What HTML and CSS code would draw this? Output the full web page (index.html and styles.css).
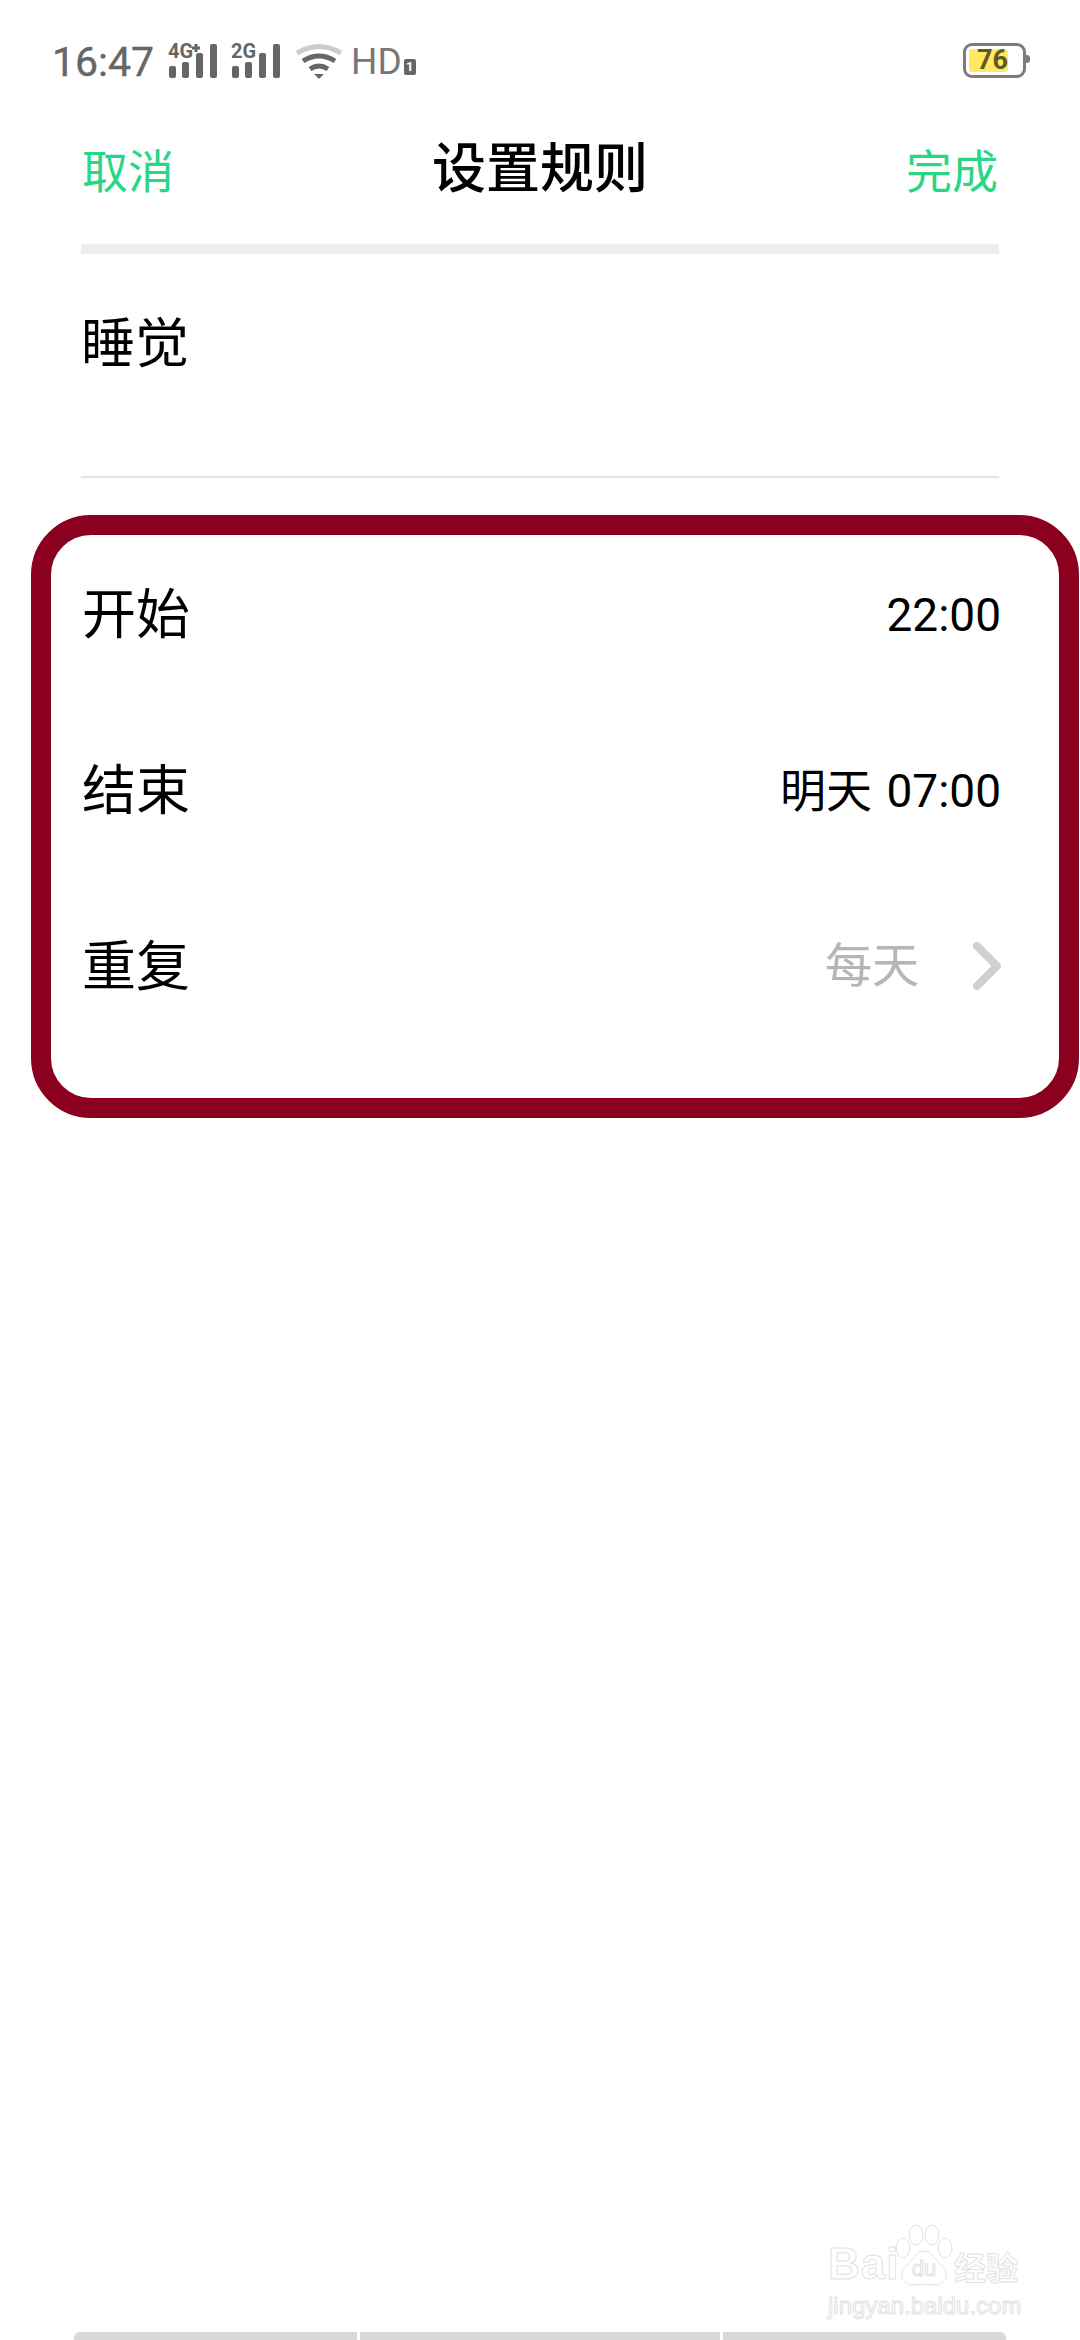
FILE: index.html
```html
<html>
  <head>
    <title>设置规则</title>
    <meta charset="UTF-8" />
    <link rel="stylesheet" href="styles.css">
  </head>
  <body>
    <div class="page">
      <div class="status">
        <span class="time">16:47</span>
        <svg class="sig sig-4g" viewBox="0 -8 50 42" width="50" height="42">
          <text x="0" y="14" class="sig-text">4G</text>
          <path d="M24 4h8M28 0v8" class="sig-plus" />
          <rect x="1" y="22" width="7" height="12" rx="2" />
          <rect x="14" y="18" width="7" height="16" rx="2" />
          <rect x="28" y="9" width="7" height="25" rx="2" />
          <rect x="42" y="0" width="7" height="34" rx="2" />
        </svg>
        <svg class="sig sig-2g" viewBox="0 -8 50 42" width="50" height="42">
          <text x="0" y="14" class="sig-text">2G</text>
          <rect x="1" y="22" width="7" height="12" rx="2" />
          <rect x="14" y="18" width="7" height="16" rx="2" />
          <rect x="28" y="9" width="7" height="25" rx="2" />
          <rect x="42" y="0" width="7" height="34" rx="2" />
        </svg>
        <svg class="wifi" viewBox="0 0 48 36" width="48" height="36">
          <path d="M2 10Q24 -3 46 10" class="arc-light" />
          <path d="M8 18Q24 8 40 18" class="arc-dark" />
          <path d="M15 26Q24 20 33 26" class="arc-dark" />
          <path d="M19 31L29 31L24 36Z" fill="#666" />
        </svg>
        <span class="hd">HD</span>
        <span class="sim">1</span>
        <span class="battery">
          <span class="battery-fill">76</span>
        </span>
      </div>

      <div class="nav">
        <span class="nav-btn">取消</span>
        <span class="nav-title">设置规则</span>
        <span class="nav-btn">完成</span>
      </div>
      <div class="rule"></div>

      <div class="name">睡觉</div>

      <div class="frame">
        <div class="row">
          <span>开始</span>
          <span class="value">22:00</span>
        </div>
        <div class="row">
          <span>结束</span>
          <span class="value">明天 07:00</span>
        </div>
        <div class="row">
          <span>重复</span>
          <span class="value value-muted">每天
            <svg class="chevron" viewBox="0 0 28 48" width="28" height="48">
              <path d="M4 4L24 24L4 44" />
            </svg>
          </span>
        </div>
      </div>

      <div class="homebar">
        <div class="homebar-seg"></div>
        <div class="homebar-seg homebar-mid"></div>
        <div class="homebar-seg"></div>
      </div>

      <!-- watermark sits over the blank page -->
      <div class="mark">
        <div class="mark-top">
          <span class="mark-bai">Bai</span>
          <svg class="paw" viewBox="0 0 60 64" width="60" height="64">
            <ellipse cx="9" cy="24" rx="7" ry="10" />
            <ellipse cx="22" cy="11" rx="7" ry="10" />
            <ellipse cx="38" cy="11" rx="7" ry="10" />
            <ellipse cx="51" cy="24" rx="7" ry="10" />
            <path d="M30 27C21 27 20 36 12 42C3 50 9 62 20 61C26 60 34 60 40 61C51 62 57 50 48 42C40 36 39 27 30 27Z" />
            <text x="30" y="52" class="paw-du">du</text>
          </svg>
          <span class="mark-cn">经验</span>
        </div>
        <div class="mark-url">jingyan.baidu.com</div>
      </div>
    </div>
  </body>
</html>
```

FILE: styles.css
```css
body {
  margin: 0;
  background-color: #fff;
  font-family: "Noto Sans CJK SC", sans-serif;
  color: #000;
}

.page {
  position: relative;
  display: flex;
  flex-direction: column;
  width: 1080px;
  height: 2340px;
  overflow: hidden;
}

.status {
  display: flex;
  align-items: flex-start;
  height: 100px;
  padding: 43px 54px 0 52px;
  box-sizing: border-box;
  color: #666;
  font-family: Roboto, sans-serif;
}

.time {
  width: 116px;
  font-size: 41px;
  line-height: 38px;
  -webkit-text-stroke: 0.4px #666;
}

.sig {
  fill: #666;
  margin-top: -7px;
}

.sig-2g {
  margin-left: 13px;
}

.sig-text {
  font-family: Roboto, sans-serif;
  font-size: 20px;
  font-weight: 700;
}

.sig-plus {
  stroke: #666;
  stroke-width: 3;
  fill: none;
}

.wifi {
  margin-left: 14px;
}

.arc-light {
  fill: none;
  stroke: #ccc;
  stroke-width: 5;
}

.arc-dark {
  fill: none;
  stroke: #666;
  stroke-width: 5;
}

.hd {
  margin-left: 8px;
  font-size: 37px;
  line-height: 38px;
  color: #777;
}

.sim {
  width: 12px;
  height: 16px;
  margin: 16px 0 0 2px;
  background-color: #666;
  border-radius: 2px;
  color: #fff;
  font-size: 13px;
  font-weight: 700;
  line-height: 16px;
  text-align: center;
}

.battery {
  position: relative;
  margin-left: auto;
  width: 63px;
  height: 35px;
  padding: 3px 0 0 3px;
  box-sizing: border-box;
  border: 3px solid #7c7c7c;
  border-radius: 9px;
}

.battery::after {
  content: "";
  position: absolute;
  right: -7px;
  top: 9px;
  width: 4px;
  height: 8px;
  background-color: #7c7c7c;
  border-radius: 0 3px 3px 0;
}

.battery-fill {
  display: block;
  width: 39px;
  height: 23px;
  background-color: #ffe963;
  border-radius: 3px;
  color: #5e5a24;
  font-size: 27px;
  font-weight: 700;
  line-height: 23px;
  text-align: right;
}

.nav {
  display: flex;
  justify-content: space-between;
  align-items: center;
  height: 144px;
  padding: 0 82px 8px;
  box-sizing: border-box;
}

.nav-btn {
  color: #2bd586;
  font-size: 46px;
}

.nav-title {
  margin-bottom: 7px;
  font-size: 54px;
  font-weight: 500;
}

.rule {
  height: 10px;
  margin: 0 81px;
  background-color: #eee;
}

.name {
  height: 171px;
  margin: 0 81px;
  padding-top: 51px;
  border-bottom: 2px solid #e4e4e4;
  font-size: 54px;
  line-height: 70px;
}

.frame {
  display: flex;
  flex-direction: column;
  gap: 76px;
  width: 1048px;
  height: 603px;
  margin: 37px 0 0 31px;
  padding: 25px 58px 0 31px;
  box-sizing: border-box;
  border: 20px solid #8a001e;
  border-radius: 60px;
}

.row {
  display: flex;
  justify-content: space-between;
  align-items: center;
  height: 100px;
  font-size: 54px;
}

.value {
  display: flex;
  align-items: center;
  margin-top: 9px;
  font-family: Roboto, "Noto Sans CJK SC", sans-serif;
  font-size: 46px;
  line-height: 60px;
  word-spacing: 3px;
}

.value-muted {
  gap: 54px;
  margin-top: 8px;
  color: #b5b5b5;
  font-size: 47px;
}

.chevron {
  fill: none;
  stroke: #d0d0d0;
  stroke-width: 8;
  stroke-linecap: round;
  stroke-linejoin: round;
}

.homebar {
  display: flex;
  gap: 3px;
  height: 8px;
  margin: auto 74px 0;
}

.homebar-seg {
  flex: 283;
  background-color: #d8d8d8;
}

.homebar-seg:first-child {
  border-radius: 6px 0 0 0;
}

.homebar-seg:last-child {
  border-radius: 0 6px 0 0;
}

.homebar-mid {
  flex: 361;
}

.mark {
  position: absolute;
  left: 828px;
  top: 2224px;
  width: 194px;
  color: #fff;
  -webkit-text-stroke: 1px #e2e2e2;
  font-family: "Liberation Sans", sans-serif;
}

.mark-top {
  display: flex;
  align-items: flex-end;
  height: 64px;
}

.mark-bai {
  width: 66px;
  font-size: 44px;
  font-weight: 700;
  line-height: 48px;
  letter-spacing: 1px;
}

.paw {
  flex: none;
  fill: #fff;
  stroke: #e2e2e2;
  stroke-width: 1;
}

.paw-du {
  fill: #fff;
  stroke: #e2e2e2;
  font-family: "Liberation Sans", sans-serif;
  font-size: 22px;
  text-anchor: middle;
}

.mark-cn {
  font-family: "Noto Sans CJK SC", sans-serif;
  font-size: 32px;
  font-weight: 700;
  line-height: 44px;
  white-space: nowrap;
}

.mark-url {
  margin-top: 3px;
  font-size: 24px;
  line-height: 30px;
  white-space: nowrap;
}
```
